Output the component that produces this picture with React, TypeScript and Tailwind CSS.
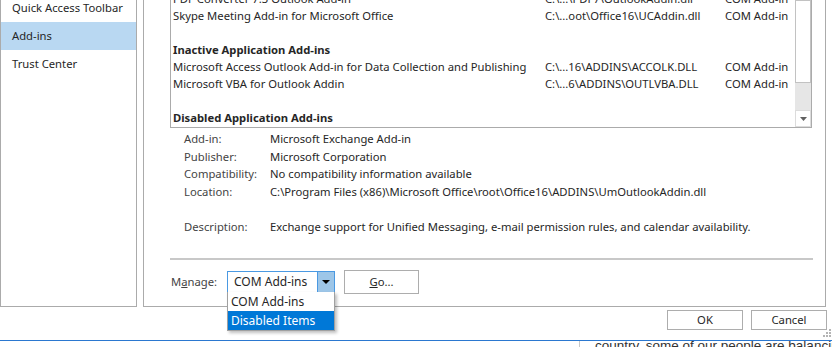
import React from 'react';

const navItems = ['Quick Access Toolbar', 'Add-ins', 'Trust Center'];

type Row = { name: string; loc?: string; type?: string; head?: boolean };

const rows: Row[] = [
  { name: 'PDF Converter 7.3 Outlook Add-in', loc: 'C:\\...\\PDF7\\OutlookAddin.dll', type: 'COM Add-in' },
  { name: 'Skype Meeting Add-in for Microsoft Office', loc: 'C:\\...oot\\Office16\\UCAddin.dll', type: 'COM Add-in' },
  { name: '' },
  { name: 'Inactive Application Add-ins', head: true },
  { name: 'Microsoft Access Outlook Add-in for Data Collection and Publishing', loc: 'C:\\...16\\ADDINS\\ACCOLK.DLL', type: 'COM Add-in' },
  { name: 'Microsoft VBA for Outlook Addin', loc: 'C:\\...6\\ADDINS\\OUTLVBA.DLL', type: 'COM Add-in' },
  { name: '' },
  { name: 'Disabled Application Add-ins', head: true },
];

const details = [
  ['Add-in:', 'Microsoft Exchange Add-in'],
  ['Publisher:', 'Microsoft Corporation'],
  ['Compatibility:', 'No compatibility information available'],
  ['Location:', 'C:\\Program Files (x86)\\Microsoft Office\\root\\Office16\\ADDINS\\UmOutlookAddin.dll'],
  ['', ''],
  ['Description:', 'Exchange support for Unified Messaging, e-mail permission rules, and calendar availability.'],
];

export default function App() {
  return (
    <div className="w-[832px] h-[347px] overflow-hidden bg-white relative text-[11.25px] text-[#262626] font-['Noto_Sans',sans-serif]">
      {/* top: nav + content panel */}
      <div className="flex h-[307px]">
        <nav className="w-[137px] h-full border-l border-r border-b border-[#ababab] overflow-hidden">
          <div className="-mt-[6px]">
            {navItems.map((item) => (
              <div
                key={item}
                className={`h-[28px] flex items-center pl-[11px] ${item === 'Add-ins' ? 'bg-[#b9d8f2]' : ''}`}
              >
                {item}
              </div>
            ))}
          </div>
        </nav>

        <div className="ml-[6px] w-[683px] h-full border-l border-r border-b border-[#ababab] relative">
          {/* add-in list */}
          <div className="ml-[26px] mr-[13px] h-[128px] border-l border-r border-b border-[#ababab] flex overflow-hidden">
            <div className="flex-1 overflow-hidden pl-[2px]">
              <div className="-mt-[9px]">
                {rows.map((r, i) => (
                  <div key={i} className="h-[17px] flex items-center whitespace-nowrap">
                    <div className={`w-[372px] shrink-0 ${r.head ? 'font-bold' : ''}`}>{r.name}</div>
                    <div className="w-[180px] shrink-0">{r.loc}</div>
                    <div>{r.type}</div>
                  </div>
                ))}
              </div>
            </div>
            <div className="w-[16px] flex flex-col">
              <div className="h-[83px] border border-[#c2c2c2] bg-white" />
              <div className="h-[27px] bg-[#e6e6e6]" />
              <div className="h-[17px] border border-[#dcdcdc] flex items-center justify-center">
                <svg width="7" height="4" viewBox="0 0 7 4">
                  <path d="M0 0h7L3.5 4z" fill="#606060" />
                </svg>
              </div>
            </div>
          </div>

          {/* details */}
          <div className="mt-[3px] pl-[40px]">
            {details.map(([k, v], i) => (
              <div key={i} className="h-[17.5px] flex items-center whitespace-nowrap">
                <div className="w-[86px] shrink-0 text-[#444]">{k}</div>
                <div>{v}</div>
              </div>
            ))}
          </div>

          <div className="mt-[22px] ml-[26px] mr-[12px] h-[2px] bg-[#c8c8c8]" />

          {/* manage row */}
          <div className="mt-[10px] h-[24px] flex items-center ml-[27px]">
            <div className="w-[56px] text-[#444]">
              M<span className="underline">a</span>nage:
            </div>
            <div className="w-[108px] h-[22px] border border-[#4a99e2] flex">
              <div className="flex-1 flex items-center pl-[6px] text-[12px]">COM Add-ins</div>
              <div className="w-[17px] bg-[#9dc6e8] border-l border-[#4a99e2] flex items-center justify-center">
                <svg width="8" height="4" viewBox="0 0 8 4">
                  <path d="M0 0h8L4 4z" fill="#000" />
                </svg>
              </div>
            </div>
            <button className="ml-[9px] w-[75px] h-[24px] border border-[#adadad] bg-white flex items-center justify-center">
              <span className="underline">G</span>o...
            </button>
          </div>

          {/* open dropdown */}
          <div className="absolute left-[83px] top-[292px] w-[108px] border-l border-r border-b border-[#a0a0a0] bg-white shadow-[2px_2px_3px_rgba(0,0,0,0.25)] z-10 text-[12px]">
            <div className="h-[19px] flex items-center pl-[3px]">COM Add-ins</div>
            <div className="h-[19px] flex items-center pl-[3px] bg-[#0078d7] text-white">Disabled Items</div>
          </div>
        </div>
      </div>

      {/* dialog buttons */}
      <div className="mt-[3px] flex justify-end gap-[8px] pr-[5px]">
        <button className="w-[76px] h-[20px] border border-[#adadad] bg-white flex items-center justify-center">OK</button>
        <button className="w-[76px] h-[20px] border border-[#adadad] bg-white flex items-center justify-center">Cancel</button>
      </div>

      <div className="mt-[10px] h-[1px] bg-[#2b78d0]" />

      {/* document underneath */}
      <div className="flex h-[6px] overflow-hidden">
        <div className="w-[579px] shrink-0" />
        <div className="border-l border-[#c8c8c8] pl-[15px] overflow-hidden">
          <div className="-mt-[2px] text-[13.5px] leading-[14px] text-[#333] whitespace-nowrap font-['Liberation_Sans',sans-serif]">
            country, some of our people are balancing
          </div>
        </div>
      </div>

      {/* resize grip */}
      <svg className="absolute right-[1px] top-[328px]" width="9" height="9" viewBox="0 0 9 9">
        <g fill="#b4b4b4">
          <rect x="7" y="1" width="2" height="2" />
          <rect x="4" y="4" width="2" height="2" />
          <rect x="7" y="4" width="2" height="2" />
          <rect x="1" y="7" width="2" height="2" />
          <rect x="4" y="7" width="2" height="2" />
          <rect x="7" y="7" width="2" height="2" />
        </g>
      </svg>
    </div>
  );
}
